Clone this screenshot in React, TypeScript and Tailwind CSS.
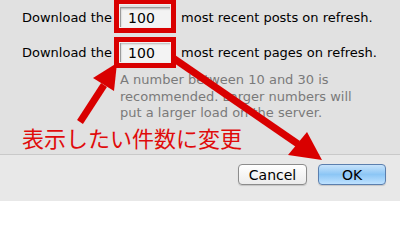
import React from "react";

function Field({ value, top }: { value: string; top: string }) {
  return (
    <div className="relative">
      <div className="w-[53px] h-[22px] bg-[#f3f3f3] border border-[#9a9a9a] shadow-[inset_0_1px_2px_rgba(0,0,0,0.25)] flex items-center pl-[7px] text-[14px] text-black">
        {value}
      </div>
      <div className={`absolute ${top} -left-[6px] -right-[3px] -bottom-[4px] border-[5px] border-[#d90000] outline outline-1 outline-[#f0f0f0] -outline-offset-[6px]`} />
    </div>
  );
}

export default function App() {
  return (
    <div
      className="relative w-[400px] h-[201px] overflow-hidden bg-[#e8e8e8] text-[13px] text-black"
      style={{ fontFamily: '"DejaVu Sans", "Noto Sans CJK JP", sans-serif' }}
    >
      <div className="h-[155px] bg-[#e1e1e1] border-b border-[#c9c9c9] pl-[22px] pt-[7px]">
        <div className="flex items-center gap-[8px] h-[22px]">
          <span>Download the</span>
          <Field value="100" top="-top-[8px]" />
          <span>most recent posts on refresh.</span>
        </div>
        <div className="flex items-center gap-[8px] h-[22px] mt-[13px]">
          <span>Download the</span>
          <Field value="100" top="-top-[5px]" />
          <span>most recent pages on refresh.</span>
        </div>
        <div className="ml-[98px] mt-[8px] text-[#7a7a7a] leading-[16.5px] text-[13px]">
          <div>A number between 10 and 30 is</div>
          <div>recommended. Larger numbers will</div>
          <div>put a larger load on the server.</div>
        </div>
        <div
          className="mt-[2px] text-[22px] leading-[26px] text-[#e00b0b]"
          style={{ fontFamily: '"Noto Sans CJK JP", sans-serif' }}
        >
          表示したい件数に変更
        </div>
      </div>
      <div className="flex justify-end gap-[11px] pr-[14px] pt-[9px]">
        <button className="w-[69px] h-[21px] rounded-[4px] border border-[#8c8c8c] bg-gradient-to-b from-[#ffffff] to-[#ececec] shadow-[0_1px_1px_rgba(0,0,0,0.15)] text-[14px] leading-none">
          Cancel
        </button>
        <button className="w-[68px] h-[21px] rounded-[4px] border border-[#5b7fae] bg-gradient-to-b from-[#c7e3fb] via-[#8cc6f5] to-[#bfe2ff] shadow-[0_1px_1px_rgba(0,0,0,0.15)] text-[14px] leading-none">
          OK
        </button>
      </div>
      <svg className="absolute inset-0 pointer-events-none" width="400" height="201" viewBox="0 0 400 201">
        <line x1="80" y1="122" x2="104" y2="85" stroke="#d90000" strokeWidth="7" />
        <polygon points="117,63 114,91 93,78" fill="#d90000" />
        <line x1="173" y1="58" x2="298" y2="144" stroke="#d90000" strokeWidth="7" />
        <polygon points="322,160 288,155 307,132" fill="#d90000" />
      </svg>
    </div>
  );
}
